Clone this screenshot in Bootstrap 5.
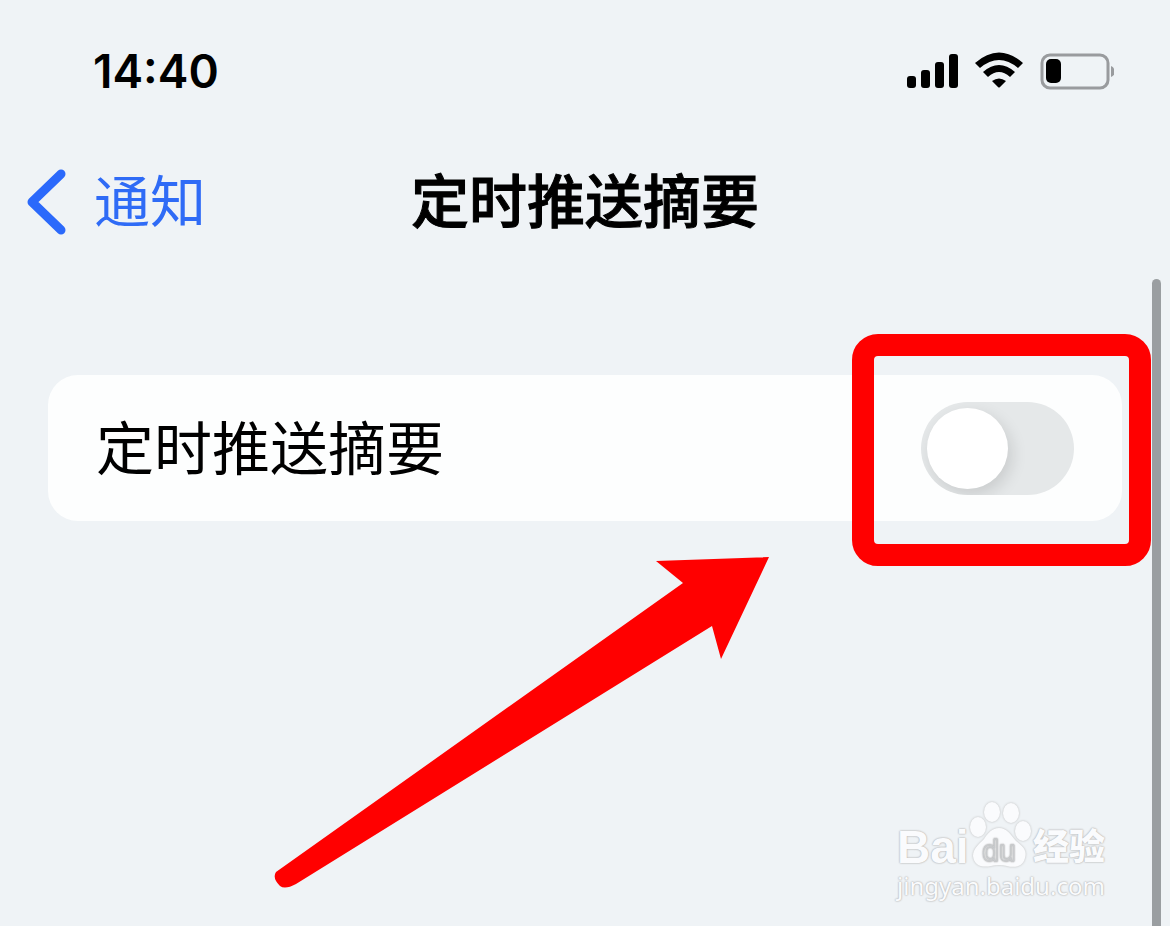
<!DOCTYPE html>
<html lang="zh-CN">
<head>
<meta charset="utf-8">
<meta name="viewport" content="width=device-width, initial-scale=1">
<title>定时推送摘要</title>
<link href="https://cdn.jsdelivr.net/npm/bootstrap@5.3.0/dist/css/bootstrap.min.css" rel="stylesheet">
<style>
  body { background: #eff3f6; color: #000; font-family: Inter, "Noto Sans CJK SC", sans-serif; }
  .screen { padding: 0 48px; overflow: hidden; }
  .status-bar { height: 142px; padding: 0 8px 0 45px; }
  .clock { font-size: 46px; font-weight: 600; line-height: 56px; }
  .title-bar { height: 120px; margin: 0 -24px; font-size: 58px; line-height: 84px; }
  .back-link { color: #2f6bf6; font-size: 56px; gap: 26px; }
  .title-bar h1 { font-size: 58px; font-weight: 500; line-height: 84px; -webkit-text-stroke: 1px #000; }
  .setting-card { margin-top: 113px; height: 146px; padding: 0 48px; border-radius: 30px; background: #fdfefe; }
  .setting-card label { padding-top: 2px; font-size: 58px; line-height: 84px; }
  .big-switch { appearance: none; width: 153px; height: 93px; border-radius: 47px; background: #e5e8e9; overflow: hidden; cursor: pointer; }
  .big-switch::before { content: ""; display: block; width: 81px; height: 81px; margin: 6px; border-radius: 50%; background: #fff; box-shadow: 4px 6px 16px rgba(0,0,0,.12); }
  .big-switch:checked { background: #34c759; }
  .big-switch:checked::before { margin-left: 66px; }
  .highlight { top: -41px; right: -29px; width: 299px; height: 232px; border: 22px solid #f00; border-radius: 26px; pointer-events: none; }
  .arrow { top: 556px; left: 274px; pointer-events: none; }
  .scroll-thumb { top: 279px; right: 9px; bottom: 0; width: 9px; border-radius: 5px 5px 0 0; background: #9a9ea1; }
  .watermark { right: 65px; bottom: 24px; width: 208px; color: #fafbfd; text-shadow: 0 0 1px #bbb, 0 0 2px #bbb, 0 0 2px #ccc; }
  .brand-latin { font: 700 46px/46px "Liberation Sans", sans-serif; }
  .brand-cjk { font-size: 36px; font-weight: 900; line-height: 46px; }
  .site { font: 24px/32px "Noto Sans", sans-serif; }
  .paw { filter: drop-shadow(0 0 1px #bbb); }
</style>
</head>
<body>
<div class="screen position-relative min-vh-100">
  <header>
    <div class="status-bar d-flex align-items-center justify-content-between">
      <time class="clock">14:40</time>
      <svg width="210" height="40" viewBox="0 0 210 40" aria-label="信号、无线网络、电池">
        <g>
          <rect x="3" y="25" width="9" height="12" rx="3"/>
          <rect x="17" y="19" width="9" height="18" rx="3"/>
          <rect x="31" y="11" width="9" height="26" rx="3"/>
          <rect x="45" y="3" width="9" height="34" rx="3"/>
        </g>
        <path d="M71 12Q95-9 119 12L114 17Q95 1 76 17ZM79 21Q95 7 111 21L106 26Q95 16 84 26ZM88 30Q95 25 102 30L96 36Q95 37 94 36Z"/>
        <rect x="138" y="4" width="66" height="33" rx="8" fill="none" stroke="#999b9e" stroke-width="3"/>
        <rect x="142" y="8" width="15" height="24" rx="5"/>
        <path d="M207 15Q211 17 211 20.500Q211 24 207 26Z" fill="#999b9e"/>
      </svg>
    </div>
    <nav class="title-bar position-relative d-flex align-items-center">
      <a class="back-link d-flex align-items-center text-decoration-none" href="#">
        <svg width="44" height="66" viewBox="0 0 44 66" fill="none" stroke="#2b69fb" stroke-width="9" stroke-linecap="round" stroke-linejoin="round" aria-hidden="true"><path d="M37 5L8 33L37 61"/></svg>
        <span>通知</span>
      </a>
      <h1 class="position-absolute start-50 translate-middle-x m-0 text-nowrap">定时推送摘要</h1>
    </nav>
  </header>
  <main>
    <div class="setting-card position-relative d-flex align-items-center justify-content-between">
      <label for="digest">定时推送摘要</label>
      <input class="big-switch m-0" type="checkbox" role="switch" id="digest">
      <div class="highlight position-absolute"></div>
    </div>
  </main>
  <svg class="arrow position-absolute" width="496" height="334" viewBox="0 0 496 334" fill="#f00" aria-hidden="true">
    <path d="M495 1L447 103L438 70L22 328Q11 334 6 330Q-2 322 2 316L409 27L382 5Z"/>
  </svg>
  <div class="scroll-thumb position-absolute"></div>
  <div class="watermark position-absolute">
    <div class="d-flex align-items-end justify-content-between">
      <span class="brand-latin">Bai</span>
      <svg class="paw" width="64" height="70" viewBox="3 0 64 70" fill="#fafbfd" aria-hidden="true">
        <ellipse cx="12" cy="27" rx="8" ry="10"/><ellipse cx="26" cy="12" rx="8" ry="10"/><ellipse cx="45" cy="13" rx="8" ry="10"/><ellipse cx="57" cy="31" rx="8" ry="10"/>
        <path d="M33 28C41 28 45 35 50 41C58 47 61 51 59 58C57 67 48 68 41 66Q33 64 25 66C15 68 8 65 7 56C7 49 13 44 18 39C22 33 26 28 33 28Z"/>
        <text x="33" y="61" text-anchor="middle" font-family="Liberation Sans, sans-serif" font-size="30" stroke="#c9cccf" stroke-width="1">du</text>
      </svg>
      <span class="brand-cjk">经验</span>
    </div>
    <div class="site">jingyan.baidu.com</div>
  </div>
</div>
<script src="https://cdn.jsdelivr.net/npm/bootstrap@5.3.0/dist/js/bootstrap.bundle.min.js"></script>
</body>
</html>
